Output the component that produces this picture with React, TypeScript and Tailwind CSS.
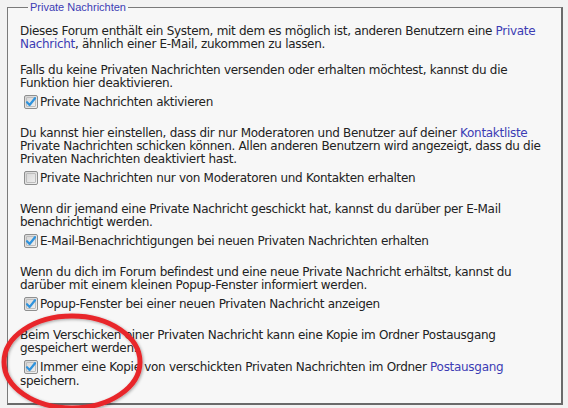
import React from "react";

const font = { fontFamily: '"DejaVu Sans", Verdana, sans-serif' };

function Check({ checked }: { checked?: boolean }) {
  return (
    <span className="relative mr-[2px] ml-[4px] inline-block h-[14px] w-[14px] rounded-[2px] border border-[#8e8f8f] bg-gradient-to-br from-[#d4d4d4] to-[#f2f2f2] align-[-3px]">
      <span className="absolute inset-[1px] rounded-[1px] border border-[#bdbdbd]" />
      {checked && (
        <svg viewBox="0 0 14 14" className="absolute -left-[1px] -top-[1px] h-[14px] w-[14px]">
          <path d="M3 7.2 L5.6 10 L11 3.2" fill="none" stroke="#2f93dd" strokeWidth="2.2" strokeLinecap="round" strokeLinejoin="round" />
        </svg>
      )}
    </span>
  );
}

function Link({ children }: { children: React.ReactNode }) {
  return <span className="text-[#3c3cb4]">{children}</span>;
}

function Section({ text, label, checked, first }: { text: React.ReactNode; label: React.ReactNode; checked?: boolean; first?: boolean }) {
  return (
    <div className={first ? "" : "mt-[18px]"}>
      <p className="leading-[13px]">{text}</p>
      <div className="mt-[5px] leading-[14px]">
        <Check checked={checked} />
        {label}
      </div>
    </div>
  );
}

export default function App() {
  return (
    <div className="relative h-[408px] w-[568px] overflow-hidden bg-[#f2f2f2] text-[12px] tracking-[-0.3px] text-[#222]" style={font}>
      <fieldset className="ml-[7px] w-[556px] border-t border-l border-r-2 border-b-2 border-t-[#7a7a7a] border-l-[#7a7a7a] border-r-[#6a6a6a] border-b-[#6a6a6a] bg-[#f7f7f7] pt-[11px] pr-[8px] pb-[15px] pl-[12px]">
        <legend className="ml-[8px] px-[2px] text-[11px] leading-[14px] tracking-normal text-[#3c3cb4]" style={{ fontFamily: '"Liberation Sans", Arial, sans-serif' }}>
          Private Nachrichten
        </legend>
        <p className="leading-[13px]">
          Dieses Forum enthält ein System, mit dem es möglich ist, anderen Benutzern eine <Link>Private</Link>
          <br />
          <Link>Nachricht</Link>, ähnlich einer E-Mail, zukommen zu lassen.
        </p>
        <div className="mt-[13px]">
          <Section
            first
            checked
            text={
              <>
                Falls du keine Privaten Nachrichten versenden oder erhalten möchtest, kannst du die
                <br />
                Funktion hier deaktivieren.
              </>
            }
            label="Private Nachrichten aktivieren"
          />
        </div>
        <Section
          text={
            <>
              Du kannst hier einstellen, dass dir nur Moderatoren und Benutzer auf deiner <Link>Kontaktliste</Link>
              <br />
              Private Nachrichten schicken können. Allen anderen Benutzern wird angezeigt, dass du die
              <br />
              Privaten Nachrichten deaktiviert hast.
            </>
          }
          label="Private Nachrichten nur von Moderatoren und Kontakten erhalten"
        />
        <Section
          checked
          text={
            <>
              Wenn dir jemand eine Private Nachricht geschickt hat, kannst du darüber per E-Mail
              <br />
              benachrichtigt werden.
            </>
          }
          label="E-Mail-Benachrichtigungen bei neuen Privaten Nachrichten erhalten"
        />
        <Section
          checked
          text={
            <>
              Wenn du dich im Forum befindest und eine neue Private Nachricht erhältst, kannst du
              <br />
              darüber mit einem kleinen Popup-Fenster informiert werden.
            </>
          }
          label="Popup-Fenster bei einer neuen Privaten Nachricht anzeigen"
        />
        <Section
          checked
          text={
            <>
              Beim Verschicken einer Privaten Nachricht kann eine Kopie im Ordner Postausgang
              <br />
              gespeichert werden.
            </>
          }
          label={
            <>
              Immer eine Kopie von verschickten Privaten Nachrichten im Ordner <Link>Postausgang</Link>
              <br />
              speichern.
            </>
          }
        />
      </fieldset>
      <svg className="pointer-events-none absolute left-0 top-0" width="568" height="408">
        <defs>
          <filter id="sh" x="-20%" y="-20%" width="140%" height="140%">
            <feDropShadow dx="1" dy="1" stdDeviation="1.5" floodColor="#000" floodOpacity="0.35" />
          </filter>
        </defs>
        <ellipse cx="72" cy="362" rx="68" ry="46" fill="none" stroke="#e8262b" strokeWidth="5" filter="url(#sh)" />
      </svg>
    </div>
  );
}
